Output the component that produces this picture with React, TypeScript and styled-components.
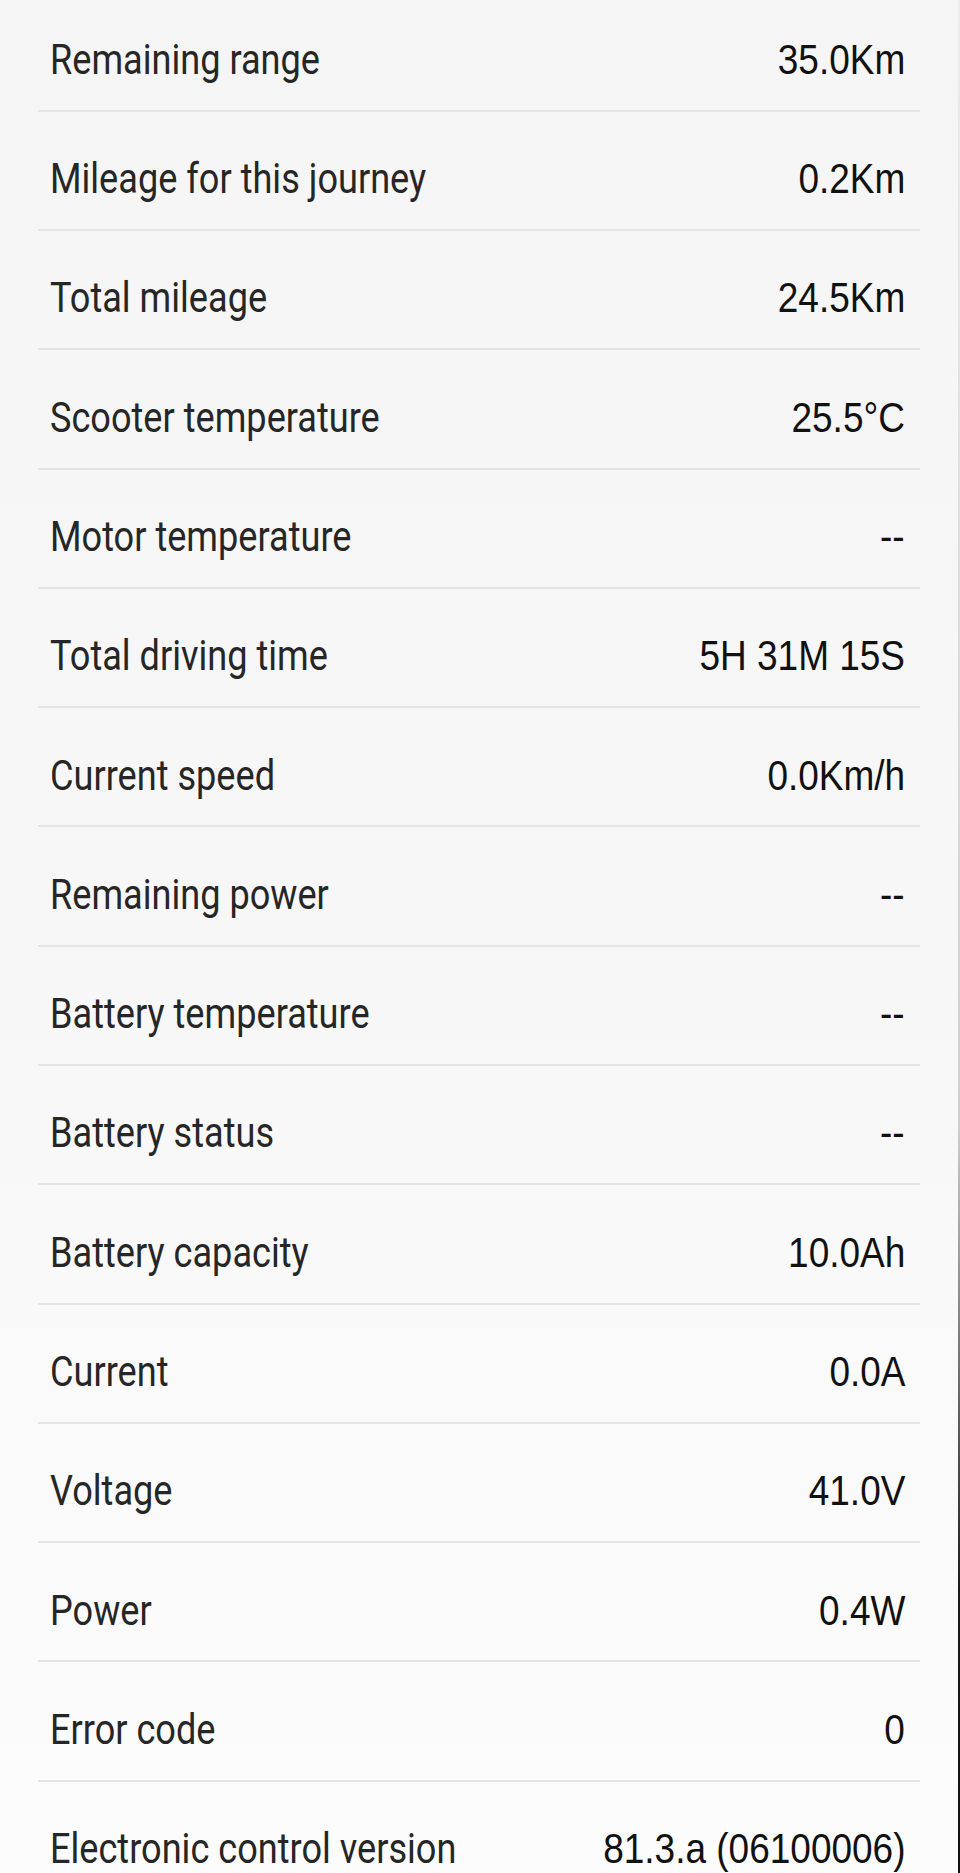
import React from "react";
import styled, { createGlobalStyle } from "styled-components";

const GlobalStyle = createGlobalStyle`
  html, body {
    margin: 0;
    padding: 0;
    background: #f6f6f6;
  }
  body {
    font-family: Roboto, "Liberation Sans", sans-serif;
    -webkit-font-smoothing: antialiased;
  }
`;

const Page = styled.div`
  box-sizing: border-box;
  width: 960px;
  height: 1873px;
  overflow: hidden;
  background: linear-gradient(180deg, #f5f5f5 0%, #f7f7f7 50%, #fcfcfc 100%);
  border-right: 2px solid transparent;
  border-image: linear-gradient(180deg, #ececec 0%, #cfcfcf 60%, #1a1a1a 85%, #111 100%) 1;
`;

const List = styled.ul`
  list-style: none;
  margin: -7.6px 38px 0 38px;
  padding: 0;
`;

const Row = styled.li`
  box-sizing: border-box;
  height: 119.29px;
  display: flex;
  align-items: flex-start;
  justify-content: space-between;
  padding: 45.5px 15px 0 12px;
  border-bottom: 2px solid #e4e4e4;
`;

const Label = styled.span`
  display: inline-block;
  font-family: Roboto, "Liberation Sans", sans-serif;
  font-size: 43px;
  line-height: 1;
  color: #262626;
  white-space: nowrap;
  transform: scaleX(0.84);
  transform-origin: left center;
`;

const Value = styled.span`
  display: inline-block;
  font-family: "Liberation Sans", Arial, sans-serif;
  font-size: 43px;
  line-height: 1;
  color: #111;
  white-space: nowrap;
  transform: scaleX(0.86);
  transform-origin: right center;
`;

const rows: [string, string][] = [
  ["Remaining range", "35.0Km"],
  ["Mileage for this journey", "0.2Km"],
  ["Total mileage", "24.5Km"],
  ["Scooter temperature", "25.5°C"],
  ["Motor temperature", "--"],
  ["Total driving time", "5H 31M 15S"],
  ["Current speed", "0.0Km/h"],
  ["Remaining power", "--"],
  ["Battery temperature", "--"],
  ["Battery status", "--"],
  ["Battery capacity", "10.0Ah"],
  ["Current", "0.0A"],
  ["Voltage", "41.0V"],
  ["Power", "0.4W"],
  ["Error code", "0"],
  ["Electronic control version", "81.3.a (06100006)"],
];

export default function App() {
  return (
    <>
      <GlobalStyle />
      <Page>
        <List>
          {rows.map(([label, value]) => (
            <Row key={label}>
              <Label>{label}</Label>
              <Value>{value}</Value>
            </Row>
          ))}
        </List>
      </Page>
    </>
  );
}
